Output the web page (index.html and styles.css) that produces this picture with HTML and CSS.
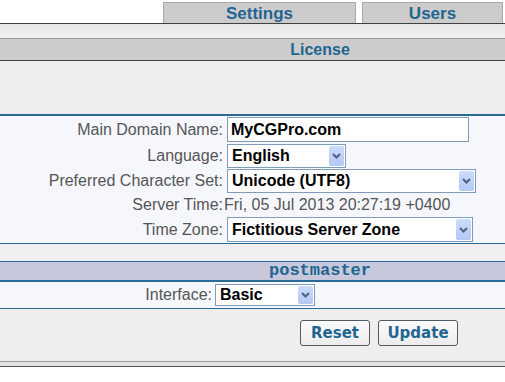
FILE: index.html
```html
<!DOCTYPE html>
<html lang="en">
<head>
  <meta charset="UTF-8">
  <title>Domain Settings</title>
  <link rel="stylesheet" href="styles.css">
</head>
<body>
  <div class="page">
    <div class="tabs">
      <div class="tab tab-settings">Settings</div>
      <div class="tab tab-users">Users</div>
    </div>
    <div class="band band-top"></div>
    <div class="bar">License</div>
    <div class="band band-mid"></div>

    <div class="form">
      <div class="row row-1">
        <label class="label">Main Domain Name:</label>
        <input class="field field-domain" type="text" value="MyCGPro.com">
      </div>
      <div class="row row-2">
        <label class="label">Language:</label>
        <span class="select select-lang">
          <span class="value">English</span>
          <span class="arrow"><svg width="9" height="6" viewBox="0 0 9 6"><path d="M1 1l3.5 3.5L8 1" fill="none" stroke="#4d6185" stroke-width="2"/></svg></span>
        </span>
      </div>
      <div class="row row-3">
        <label class="label">Preferred Character Set:</label>
        <span class="select select-charset">
          <span class="value">Unicode (UTF8)</span>
          <span class="arrow"><svg width="9" height="6" viewBox="0 0 9 6"><path d="M1 1l3.5 3.5L8 1" fill="none" stroke="#4d6185" stroke-width="2"/></svg></span>
        </span>
      </div>
      <div class="row row-4">
        <label class="label">Server Time:</label>
        <span class="text">Fri, 05 Jul 2013 20:27:19 +0400</span>
      </div>
      <div class="row row-5">
        <label class="label">Time Zone:</label>
        <span class="select select-zone">
          <span class="value">Fictitious Server Zone</span>
          <span class="arrow"><svg width="9" height="6" viewBox="0 0 9 6"><path d="M1 1l3.5 3.5L8 1" fill="none" stroke="#4d6185" stroke-width="2"/></svg></span>
        </span>
      </div>
    </div>

    <div class="band band-gap"></div>
    <div class="subbar">postmaster</div>

    <div class="form form-user">
      <div class="row row-iface">
        <label class="label">Interface:</label>
        <span class="select select-iface">
          <span class="value">Basic</span>
          <span class="arrow"><svg width="9" height="6" viewBox="0 0 9 6"><path d="M1 1l3.5 3.5L8 1" fill="none" stroke="#4d6185" stroke-width="2"/></svg></span>
        </span>
      </div>
    </div>

    <div class="actions">
      <button class="button button-reset">Reset</button>
      <button class="button button-update">Update</button>
    </div>
    <div class="footer"></div>
  </div>
</body>
</html>
```

FILE: styles.css
```css
:root {
  --blue: #1f6590;
  --line: #2a6a94;
  --grey: #cccccc;
  --light: #eeeeee;
  --form: #f5f7fd;
}

* {
  box-sizing: border-box;
}

body {
  margin: 0;
  background: #fff;
  font-family: "Liberation Sans", Arial, sans-serif;
}

.page {
  width: 100%;
  overflow: hidden;
}

.tabs {
  display: flex;
  height: 24px;
  padding-left: 163px;
  border-bottom: 1px solid #404040;
}

.tab {
  flex: none;
  margin-top: 2px;
  height: 21px;
  background: var(--grey);
  border: 1px solid #a8a8a8;
  border-bottom: none;
  color: var(--blue);
  font-weight: bold;
  font-size: 17px;
  line-height: 21px;
  text-align: center;
}

.tab-settings {
  width: 193px;
}

.tab-users {
  width: 141px;
  margin-left: 6px;
}

.band {
  background: var(--light);
}

.band-top {
  height: 14px;
  background: linear-gradient(#e6e6e6, #f0f0f0);
}

.bar {
  height: 23px;
  padding-left: 135px;
  background: var(--grey);
  border-top: 1px solid #9a9a9a;
  border-bottom: 1px solid #404040;
  color: var(--blue);
  font-weight: bold;
  font-size: 16px;
  line-height: 21px;
  text-align: center;
}

.band-mid {
  height: 53px;
}

.form {
  background: var(--form);
  border-top: 2px solid var(--line);
  border-bottom: 1px solid var(--line);
}

.row {
  display: grid;
  grid-template-columns: 224px auto;
  align-items: center;
}

.row-1 { height: 27px; }
.row-2 { height: 25px; }
.row-3 { height: 25px; }
.row-4 { height: 23px; }
.row-5 { height: 27px; }

.label {
  text-align: right;
  padding-right: 1px;
  color: #555;
  font-size: 16px;
}

.text {
  color: #555;
  font-size: 16px;
}

.field {
  margin-left: 3px;
  height: 25px;
  width: 242px;
  border: 1px solid #7f9db9;
  background: #fff;
  padding: 0 3px;
  font-family: "Liberation Sans", Arial, sans-serif;
  font-weight: bold;
  font-size: 16px;
  color: #000;
  outline: none;
}

.select {
  position: relative;
  display: flex;
  align-items: center;
  margin-left: 3px;
  height: 24px;
  border: 1px solid #7f9db9;
  background: #fff;
  padding-left: 4px;
  font-weight: bold;
  font-size: 16px;
  color: #000;
}

.select-lang { width: 119px; }
.select-charset { width: 249px; }
.select-zone { width: 246px; height: 25px; }

.arrow {
  position: absolute;
  top: 1px;
  right: 1px;
  bottom: 1px;
  width: 15px;
  display: flex;
  align-items: center;
  justify-content: center;
  background: linear-gradient(#cddcfb, #b4c8f5);
  border-radius: 2px;
}

.band-gap {
  height: 17px;
  background: #f0eef0;
}

.subbar {
  height: 21px;
  padding-left: 135px;
  background: #c8c8dc;
  border-top: 1px solid var(--line);
  border-bottom: 2px solid var(--line);
  color: var(--blue);
  font-family: "Liberation Mono", "Courier New", monospace;
  font-weight: bold;
  font-size: 17px;
  line-height: 18px;
  text-align: center;
}

.form-user {
  border-top: none;
}

.row-iface {
  grid-template-columns: 213px auto;
  height: 26px;
}

.row-iface .select {
  margin-left: 2px;
  width: 100px;
  height: 22px;
}

.actions {
  display: flex;
  gap: 8px;
  height: 52px;
  padding: 11px 0 0 300px;
  background: var(--light);
}

.button {
  height: 26px;
  padding: 0;
  background: linear-gradient(#fbfbfb, #ececec);
  border: 1px solid #505a60;
  border-radius: 3px;
  color: var(--blue);
  font-family: "DejaVu Sans", Verdana, sans-serif;
  font-weight: bold;
  font-size: 15px;
}

.button-reset { width: 70px; }
.button-update { width: 80px; }

.footer {
  height: 6px;
  border-top: 1px solid #9a9a9a;
  border-bottom: 1px solid #505050;
  background: #e2e2e2;
}
```
